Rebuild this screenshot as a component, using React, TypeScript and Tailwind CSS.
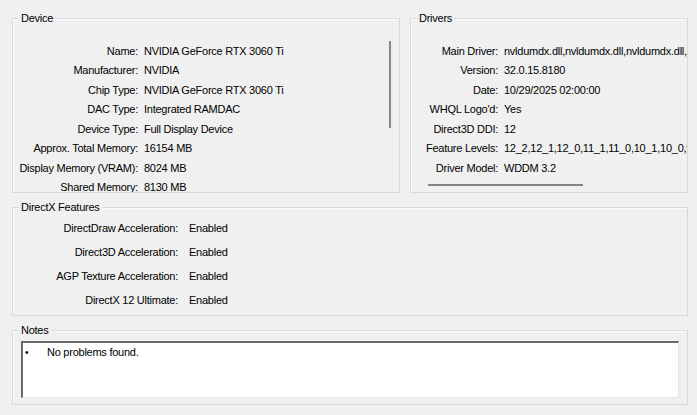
import React from "react";

const deviceRows: [string, string][] = [
  ["Name:", "NVIDIA GeForce RTX 3060 Ti"],
  ["Manufacturer:", "NVIDIA"],
  ["Chip Type:", "NVIDIA GeForce RTX 3060 Ti"],
  ["DAC Type:", "Integrated RAMDAC"],
  ["Device Type:", "Full Display Device"],
  ["Approx. Total Memory:", "16154 MB"],
  ["Display Memory (VRAM):", "8024 MB"],
  ["Shared Memory:", "8130 MB"],
];

const driverRows: [string, string][] = [
  ["Main Driver:", "nvldumdx.dll,nvldumdx.dll,nvldumdx.dll,nvldumdx.dll"],
  ["Version:", "32.0.15.8180"],
  ["Date:", "10/29/2025 02:00:00"],
  ["WHQL Logo'd:", "Yes"],
  ["Direct3D DDI:", "12"],
  ["Feature Levels:", "12_2,12_1,12_0,11_1,11_0,10_1,10_0,9_3,9_2,9_1"],
  ["Driver Model:", "WDDM 3.2"],
];

const featureRows: [string, string][] = [
  ["DirectDraw Acceleration:", "Enabled"],
  ["Direct3D Acceleration:", "Enabled"],
  ["AGP Texture Acceleration:", "Enabled"],
  ["DirectX 12 Ultimate:", "Enabled"],
];

function Group({ title, className, children }: { title: string; className?: string; children: React.ReactNode }) {
  return (
    <div className={`relative border border-[#d9d9d9] shadow-[inset_1px_1px_0_#fafafa] ${className ?? ""}`}>
      <div className="h-full w-full overflow-hidden">{children}</div>
      <span className="absolute -top-[9px] left-[6px] bg-[#f0f0f0] px-[2px] leading-[16px]">{title}</span>
    </div>
  );
}

export default function App() {
  return (
    <div
      className="w-[697px] h-[415px] bg-[#f0f0f0] pl-[12px] pr-[9px] pt-[18px] text-[11px] tracking-[-0.25px] text-black overflow-hidden"
      style={{ fontFamily: '"Liberation Sans", Arial, sans-serif' }}
    >
      <div className="flex gap-[10px] h-[175px]">
        {/* Device */}
        <Group title="Device" className="w-[388px] shrink-0">
          <div className="pt-[22px]">
            {deviceRows.map(([k, v]) => (
              <div key={k} className="flex h-[19.5px] items-center whitespace-nowrap">
                <div className="w-[125px] shrink-0 text-right">{k}</div>
                <div className="pl-[6px]">{v}</div>
              </div>
            ))}
          </div>
          <div className="absolute left-[376px] top-[22px] w-[2px] h-[87px] bg-[#858585]" />
        </Group>

        {/* Drivers */}
        <Group title="Drivers" className="flex-1 min-w-0">
          <div className="pt-[22px] pr-[1px]">
            {driverRows.map(([k, v]) => (
              <div key={k} className="flex h-[19.5px] items-center whitespace-nowrap">
                <div className="w-[87px] shrink-0 text-right">{k}</div>
                <div className="pl-[6px]">{v}</div>
              </div>
            ))}
          </div>
          <div className="absolute left-[17px] top-[165px] w-[155px] h-[2px] bg-[#858585]" />
        </Group>
      </div>

      {/* DirectX Features */}
      <Group title="DirectX Features" className="mt-[14px] h-[109px]">
        <div className="pt-[8px]">
          {featureRows.map(([k, v]) => (
            <div key={k} className="flex h-[24px] items-center whitespace-nowrap">
              <div className="w-[165px] shrink-0 text-right">{k}</div>
              <div className="pl-[11px]">{v}</div>
            </div>
          ))}
        </div>
      </Group>

      {/* Notes */}
      <Group title="Notes" className="mt-[14px] h-[75px]">
        <div className="mt-[10px] ml-[8px] mr-[8px] h-[57px] bg-white border-t-[2px] border-l-[2px] border-t-[#696969] border-l-[#696969] border-r border-b border-r-[#e3e3e3] border-b-[#e3e3e3]">
          <div className="flex items-center h-[18px] pl-[2px]">
            <span className="w-[22px] text-[10px]">•</span>
            <span>No problems found.</span>
          </div>
        </div>
      </Group>
    </div>
  );
}
